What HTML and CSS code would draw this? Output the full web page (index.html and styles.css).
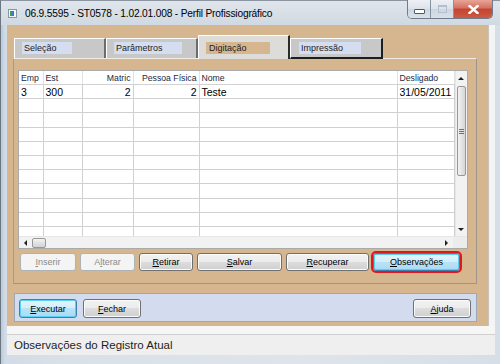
FILE: index.html
```html
<!DOCTYPE html>
<html lang="pt-BR">
<head>
  <meta charset="UTF-8">
  <title>Perfil Profissiográfico</title>
  <link rel="stylesheet" href="styles.css">
</head>
<body>

  <div class="janela">

    <div class="barra-titulo">
      <svg class="icone-app" width="9" height="9" viewBox="0 0 9 9">
        <rect x="0.5" y="0.5" width="8" height="8" fill="#f4f6f8" stroke="#8a96a4"/>
        <rect x="2" y="2" width="2" height="5" fill="#3aa04a"/>
        <rect x="4" y="2" width="2" height="5" fill="#3c78c8"/>
      </svg>
      <span class="titulo">06.9.5595 - ST0578 - 1.02.01.008 - Perfil Profissiográfico</span>
      <div class="botoes-janela">
        <span class="bj bj-min"><i></i></span>
        <span class="bj bj-max"><i></i></span>
        <span class="bj bj-fechar">
          <svg width="11" height="9" viewBox="0 0 11 9">
            <path d="M1.5 1 L9.5 8 M9.5 1 L1.5 8" stroke="#fff" stroke-width="2.4" stroke-linecap="square"/>
          </svg>
        </span>
      </div>
    </div>

    <div class="cliente">
      <div class="area">
        <div class="formulario">

          <div class="abas">
            <div class="aba"><span class="rotulo r-selecao">Seleção</span></div>
            <div class="aba"><span class="rotulo r-parametros">Parâmetros</span></div>
            <div class="aba aba-ativa"><span class="rotulo r-digitacao">Digitação</span></div>
            <div class="aba aba-ultima"><span class="rotulo r-impressao">Impressão</span></div>
          </div>

          <div class="painel">
            <div class="grade">
              <div class="grade-corpo">
                <table class="tabela">
                  <colgroup>
                    <col style="width:24px">
                    <col style="width:39px">
                    <col style="width:51px">
                    <col style="width:66px">
                    <col style="width:198px">
                    <col style="width:57px">
                  </colgroup>
                  <thead>
                    <tr>
                      <th>Emp</th>
                      <th>Est</th>
                      <th class="dir">Matric</th>
                      <th class="dir">Pessoa Física</th>
                      <th>Nome</th>
                      <th>Desligado</th>
                    </tr>
                  </thead>
                  <tbody>
                    <tr>
                      <td>3</td>
                      <td>300</td>
                      <td class="dir">2</td>
                      <td class="dir">2</td>
                      <td>Teste</td>
                      <td>31/05/2011</td>
                    </tr>
                    <tr><td></td><td></td><td></td><td></td><td></td><td></td></tr>
                    <tr><td></td><td></td><td></td><td></td><td></td><td></td></tr>
                    <tr><td></td><td></td><td></td><td></td><td></td><td></td></tr>
                    <tr><td></td><td></td><td></td><td></td><td></td><td></td></tr>
                    <tr><td></td><td></td><td></td><td></td><td></td><td></td></tr>
                    <tr><td></td><td></td><td></td><td></td><td></td><td></td></tr>
                    <tr><td></td><td></td><td></td><td></td><td></td><td></td></tr>
                    <tr><td></td><td></td><td></td><td></td><td></td><td></td></tr>
                    <tr><td></td><td></td><td></td><td></td><td></td><td></td></tr>
                    <tr><td></td><td></td><td></td><td></td><td></td><td></td></tr>
                  </tbody>
                </table>
                <div class="rolagem-v">
                  <span class="seta-box"><i class="seta seta-cima"></i></span>
                  <span class="polegar-v"><i></i><i></i><i></i></span>
                  <span class="trilho"></span>
                  <span class="seta-box"><i class="seta seta-baixo"></i></span>
                </div>
              </div>
              <div class="rolagem-h">
                <span class="seta-box-h"><i class="seta seta-esq"></i></span>
                <span class="polegar-h"></span>
                <span class="trilho"></span>
                <span class="seta-box-h"><i class="seta seta-dir"></i></span>
                <span class="canto"></span>
              </div>
            </div>

            <div class="acoes">
              <button class="botao desabilitado"><u>I</u>nserir</button>
              <button class="botao desabilitado">A<u>l</u>terar</button>
              <button class="botao"><u>R</u>etirar</button>
              <button class="botao"><u>S</u>alvar</button>
              <button class="botao"><u>R</u>ecuperar</button>
              <button class="botao foco destaque"><u>O</u>bservações</button>
            </div>
          </div>

          <div class="rodape">
            <button class="botao foco"><u>E</u>xecutar</button>
            <button class="botao"><u>F</u>echar</button>
            <button class="botao botao-ajuda"><u>A</u>juda</button>
          </div>

        </div>
        <div class="faixa-lateral"></div>
      </div>
      <div class="separador"></div>
      <div class="status">Observações do Registro Atual</div>
    </div>

  </div>

</body>
</html>
```

FILE: styles.css
```css
body {
  margin: 0;
  width: 500px;
  height: 364px;
  overflow: hidden;
  font-family: "Liberation Sans", Arial, sans-serif;
  background-color: #ffffff;
}
.janela {
  width: 500px;
  height: 364px;
  display: flex;
  flex-direction: column;
  box-sizing: border-box;
  border-left: 1px solid #6b7683;
  border-top: 1px solid #8c96a2;
  background: linear-gradient(90deg, #b9c9dc 0px, #d2dbe6 4px, #d9e0e8 60px, #dfe4ea 300px, #d6dee8 100%);
}
.barra-titulo {
  height: 24px;
  display: flex;
  align-items: flex-start;
  background: linear-gradient(#dfe5eb, #d0d9e2);
}
.icone-app {
  margin: 8px 0 0 7px;
}
.titulo {
  margin: 7px 0 0 8px;
  font-size: 10.2px;
  letter-spacing: -0.18px;
  color: #000;
  line-height: 12px;
  white-space: nowrap;
}
.botoes-janela {
  margin-left: auto;
  margin-right: 7px;
  margin-top: -1px;
  display: flex;
  height: 18px;
  border: 1px solid #6f7c8c;
  border-top: none;
  border-radius: 0 0 5px 5px;
  overflow: hidden;
}
.bj {
  height: 18px;
  display: flex;
  align-items: center;
  justify-content: center;
}
.bj-min,
.bj-max {
  width: 22px;
  border-right: 1px solid #8593a3;
  background: linear-gradient(#edf1f5, #dbe2ea 50%, #cdd6e0 50%, #d8e0e9);
}
.bj-min i {
  width: 9px;
  height: 3px;
  margin-top: 4px;
  background: #fff;
  border: 1px solid #4d5a68;
  border-radius: 1px;
}
.bj-max i {
  width: 7px;
  height: 6px;
  border: 1px solid #b3bfcc;
  box-shadow: inset 0 1px 0 #b3bfcc;
}
.bj-fechar {
  width: 38px;
  background: linear-gradient(#e8a596, #d5705f 45%, #c44431 50%, #cc5a44);
}

.cliente {
  flex: 1;
  display: flex;
  flex-direction: column;
  margin: 0 5px 9px 6px;
}
.area {
  height: 301px;
  display: flex;
}
.formulario {
  width: 481px;
  background-color: #d5b68e;
  box-sizing: border-box;
  padding-top: 10px;
}
.faixa-lateral {
  flex: 1;
  background: #f3f4f6;
  border-left: 1px solid #c9c3b8;
}

/* abas */
.abas {
  display: flex;
  align-items: flex-end;
  height: 23px;
  margin-left: 7px;
}
.aba {
  width: 92px;
  height: 20px;
  box-sizing: border-box;
  background-color: #c8c8c8;
  border-top: 1px solid #ffffff;
  border-left: 1px solid #ffffff;
  border-right: 2px solid #6c6c6c;
  padding: 3px 0 0 7px;
}
.aba-ativa {
  height: 24px;
  background-color: #dedcd8;
  border-right: 2px solid #2a2a2a;
  margin-bottom: -1px;
  position: relative;
  z-index: 1;
  padding-top: 6px;
}
.aba-ultima {
  width: 93px;
  border-right: 2px solid #1e1e1e;
  border-bottom: 2px solid #1e1e1e;
  height: 21px;
  margin-bottom: -1px;
  position: relative;
  z-index: 1;
  padding-left: 8px;
}
.rotulo {
  display: block;
  height: 12px;
  line-height: 12px;
  font-size: 9px;
  color: #1c1c1c;
  padding-left: 2px;
  background-color: #d5def0;
  white-space: nowrap;
}
.r-selecao { width: 48px; }
.r-parametros { width: 66px; }
.r-digitacao { width: 61px; background-color: #d5b68e; padding-left: 3px; }
.r-impressao { width: 60px; }

/* painel da aba */
.painel {
  width: 464px;
  height: 226px;
  box-sizing: border-box;
  margin-left: 6px;
  border: 1px solid #9d958a;
  border-top-color: #f3ece2;
  border-left-color: #a49c91;
  padding: 11px 0 0 4px;
}
.grade {
  width: 450px;
  height: 179px;
  box-sizing: border-box;
  border: 1px solid #aaaaaa;
  background: #ffffff;
  display: flex;
  flex-direction: column;
}
.grade-corpo {
  height: 166px;
  display: flex;
  overflow: hidden;
}
.tabela {
  width: 435px;
  table-layout: fixed;
  border-collapse: collapse;
  align-self: flex-start;
}
.tabela th {
  height: 13px;
  padding: 0 2px;
  font-size: 8.7px;
  font-weight: normal;
  color: #1b2a44;
  text-align: left;
  border-right: 1px solid #e2e2e2;
  border-bottom: 1px solid #d2d2d2;
  white-space: nowrap;
  overflow: hidden;
}
.tabela td {
  height: 13.2px;
  padding: 0 2px;
  font-size: 10.5px;
  color: #000;
  border-right: 1px solid #d0d0d0;
  border-bottom: 1px solid #d0d0d0;
  white-space: nowrap;
  overflow: hidden;
}
.tabela .dir {
  text-align: right;
}

/* barras de rolagem */
.rolagem-v {
  width: 13px;
  display: flex;
  flex-direction: column;
  background: #f2f2f2;
  border-left: 1px solid #e6e6e6;
}
.seta-box {
  height: 14px;
  display: flex;
  align-items: center;
  justify-content: center;
}
.seta {
  width: 0;
  height: 0;
  border: 3px solid transparent;
}
.seta-cima { border-bottom-color: #222; border-top-width: 0; }
.seta-baixo { border-top-color: #222; border-bottom-width: 0; }
.seta-esq { border-right-color: #222; border-left-width: 0; }
.seta-dir { border-left-color: #222; border-right-width: 0; }
.polegar-v {
  height: 88px;
  margin: 1px 1px 0 1px;
  border: 1px solid #989898;
  border-radius: 2px;
  background: linear-gradient(90deg, #f3f3f3, #e4e4e4 50%, #d6d6d6);
  display: flex;
  flex-direction: column;
  align-items: center;
  justify-content: center;
  gap: 1px;
}
.polegar-v i {
  width: 5px;
  height: 1px;
  background: #6f6f6f;
}
.trilho {
  flex: 1;
}
.rolagem-h {
  height: 11px;
  display: flex;
  background: #f2f2f2;
  border-top: 1px solid #e6e6e6;
}
.seta-box-h {
  width: 13px;
  display: flex;
  align-items: center;
  justify-content: center;
}
.polegar-h {
  width: 12px;
  margin-top: 1px;
  border: 1px solid #989898;
  border-radius: 2px;
  background: linear-gradient(#f3f3f3, #e2e2e2 50%, #d4d4d4);
}
.canto {
  width: 14px;
  background: #ececec;
}

/* botoes */
.botao {
  height: 18px;
  margin: 0;
  padding: 0;
  box-sizing: border-box;
  font-family: "Liberation Sans", Arial, sans-serif;
  font-size: 9px;
  color: #000;
  border: 1px solid #707070;
  border-radius: 3px;
  background: linear-gradient(#f2f2f2, #ebebeb 50%, #dddddd 50%, #cfcfcf);
  box-shadow: inset 0 0 0 1px #fbfbfb;
  cursor: pointer;
}
.botao.desabilitado {
  color: #8a8a8a;
  border-color: #adb2b5;
  background: #f4f4f4;
  box-shadow: none;
}
.botao.foco {
  border-color: #3c7fb1;
  background: linear-gradient(#e4f5fd, #d0eefb 50%, #b8e3f7 50%, #a9dbf4);
  box-shadow: inset 0 0 0 1px #59d0f4;
}
.botao.destaque {
  outline: 2px solid #e3161d;
  outline-offset: 0;
}
.acoes {
  display: grid;
  grid-template-columns: 56px 55px 54px 85px 83px 87px;
  column-gap: 4px;
  margin: 4px 0 0 2px;
}

.rodape {
  width: 463px;
  height: 29px;
  box-sizing: border-box;
  margin: 9px 0 0 7px;
  border: 1px solid #9ca8b8;
  background-color: #d3dcee;
  display: flex;
  gap: 6px;
  padding: 5px 5px 0 4px;
}
.rodape .botao {
  width: 58px;
  height: 19px;
}
.rodape .botao-ajuda {
  margin-left: auto;
}

/* barra de status */
.separador {
  height: 8px;
  background: #f6f6f6;
  border-bottom: 1px solid #cfcfcf;
}
.status {
  flex: 1;
  background: #efefef;
  font-size: 11.5px;
  color: #1e1e1e;
  line-height: 20px;
  padding-left: 7px;
}
```
